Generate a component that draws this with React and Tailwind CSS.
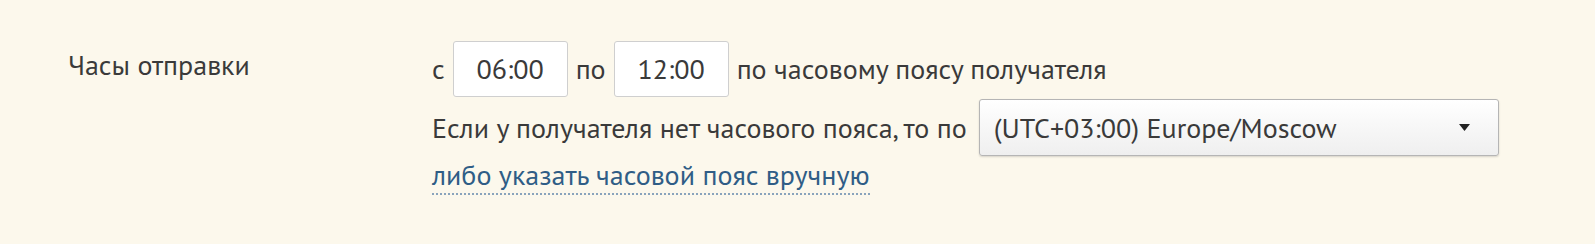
export default function App() {
  return (
    <div className="h-[244px] w-full bg-[#fcf8ec] text-[#3a3a3a] text-[28px] leading-[34px] font-['PT_Sans','Open_Sans','Noto_Sans',sans-serif]">
      <div className="flex pl-[68px] pt-[41px]">
        <div className="w-[364px] shrink-0 pt-[7px]">Часы отправки</div>

        <div className="flex flex-col">
          <div className="flex items-center gap-[8px]">
            <span>с</span>
            <div className="flex h-[56px] w-[115px] items-center justify-center rounded-[3px] border border-[#cfcfcf] bg-white">
              06:00
            </div>
            <span>по</span>
            <div className="flex h-[56px] w-[115px] items-center justify-center rounded-[3px] border border-[#cfcfcf] bg-white">
              12:00
            </div>
            <span>по часовому поясу получателя</span>
          </div>

          <div className="mt-[2px] flex items-center gap-[12px]">
            <span>Если у получателя нет часового пояса, то по</span>
            <div className="flex h-[57px] w-[520px] items-center justify-between rounded-[3px] border border-[#b5b5b5] bg-gradient-to-b from-white to-[#efefef] pl-[14px] pr-[28px] shadow-[0_1px_2px_rgba(0,0,0,0.15)]">
              <span>(UTC+03:00) Europe/Moscow</span>
              <svg width="11" height="7" viewBox="0 0 11 7">
                <path d="M0 0h11L5.5 7z" fill="#222" />
              </svg>
            </div>
          </div>

          <div className="mt-[2px]">
            <a className="text-[#2f5d86] border-b-2 border-dotted border-[#8aa4bc]">
              либо указать часовой пояс вручную
            </a>
          </div>
        </div>
      </div>
    </div>
  );
}
